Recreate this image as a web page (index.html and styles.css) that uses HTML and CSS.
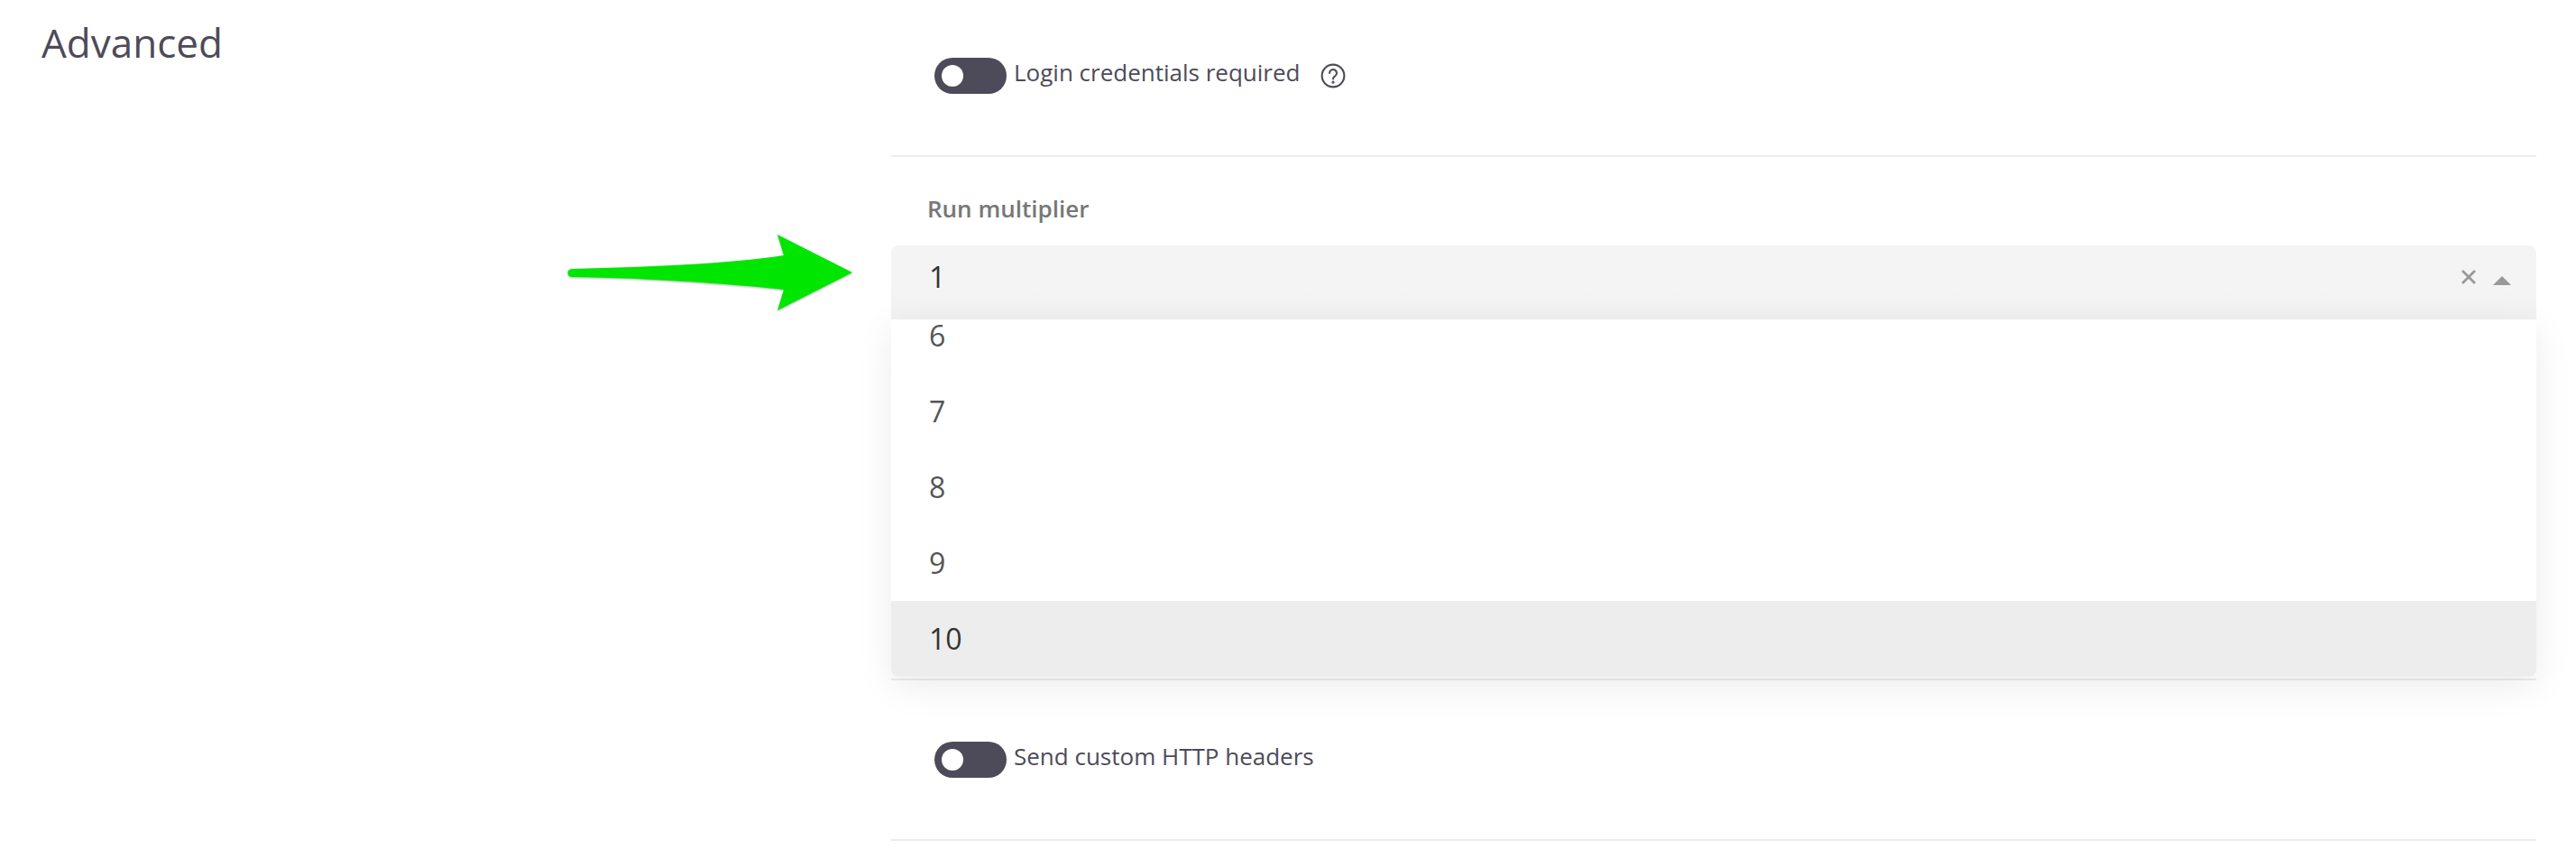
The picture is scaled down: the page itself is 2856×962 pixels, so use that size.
FILE: index.html
```html
<!DOCTYPE html>
<html lang="en">
<head>
    <meta charset="UTF-8">
    <title>Advanced settings</title>
    <link rel="stylesheet" href="styles.css">
</head>
<body>
    <div class="settings-page">
        <h2 class="side-title">Advanced</h2>

        <div class="settings-list">
            <div class="row row-login">
                <span class="toggle"><span class="knob"></span></span>
                <span class="toggle-label">Login credentials required</span>
                <svg class="help-icon" viewBox="0 0 24 24" width="28" height="28" fill="none" stroke="#4d4b59" stroke-width="1.8" stroke-linecap="round">
                    <circle cx="12" cy="12" r="10.6"/>
                    <path d="M8.6 9.4a3.4 3.4 0 1 1 5.2 2.9c-1.2.8-1.8 1.4-1.8 2.7"/>
                    <circle cx="12" cy="18.2" r="0.5" fill="#4d4b59"/>
                </svg>
            </div>

            <div class="row row-select">
                <label class="field-label">Run multiplier</label>
                <div class="select">
                    <div class="select-control">
                        <span class="select-value">1</span>
                        <svg class="clear-icon" viewBox="0 0 16 16" width="16" height="16" stroke="#999" stroke-width="2.8" fill="none">
                            <path d="M1 1l14 14M15 1l-14 14"/>
                        </svg>
                        <span class="caret"></span>
                    </div>
                    <div class="select-menu">
                        <div class="option">6</div>
                        <div class="option">7</div>
                        <div class="option">8</div>
                        <div class="option">9</div>
                        <div class="option selected">10</div>
                    </div>
                </div>
            </div>

            <div class="row row-headers">
                <span class="toggle"><span class="knob"></span></span>
                <span class="toggle-label">Send custom HTTP headers</span>
            </div>
        </div>
    </div>

    <!-- annotation arrow on top of the screenshot -->
    <svg class="arrow" width="340" height="110" viewBox="0 0 340 110">
        <path d="M12 43C100 41 190 37 247 28L240 5L323 47L240 89L247 66C190 60 100 53 12 52C6 52 6 43 12 43Z" fill="#00e600"/>
    </svg>
</body>
</html>
```

FILE: styles.css
```css
* {
    margin: 0;
    padding: 0;
    box-sizing: border-box;
}

body {
    background: #fff;
    font-family: "Open Sans", "Noto Sans", sans-serif;
    color: #4d4b59;
    height: 962px;
    overflow: hidden;
    position: relative;
}

.settings-page {
    display: grid;
    grid-template-columns: 988px 1824px;
}

.side-title {
    font-size: 44px;
    font-weight: 400;
    line-height: 60px;
    padding: 17px 0 0 46px;
}

.row {
    border-bottom: 2px solid #ececec;
}

.row-login {
    height: 174px;
    padding: 64px 0 0 48px;
    display: flex;
    align-items: flex-start;
}

.row-select {
    height: 580px;
    padding-top: 42px;
}

.row-headers {
    height: 178px;
    padding: 68px 0 0 48px;
    display: flex;
    align-items: flex-start;
}

.toggle {
    width: 80px;
    height: 40px;
    border-radius: 20px;
    background: #4d4b59;
    display: flex;
    align-items: center;
    padding-left: 8px;
    flex-shrink: 0;
}

.knob {
    width: 24px;
    height: 24px;
    border-radius: 50%;
    background: #fff;
}

.toggle-label {
    font-size: 26px;
    line-height: 32px;
    margin-left: 8px;
}

.help-icon {
    margin: 6px 0 0 23px;
}

.field-label {
    display: block;
    font-size: 26px;
    font-weight: 600;
    line-height: 30px;
    color: #777;
    padding-left: 40px;
    margin-bottom: 26px;
}

.select {
    position: relative;
}

.select-control {
    height: 82px;
    background: linear-gradient(#f4f4f4 60%, #f1f1f1);
    border-radius: 8px 8px 0 0;
    display: flex;
    align-items: center;
    padding: 0 28px 14px 42px;
}

.select-value {
    flex: 1;
    font-size: 32px;
    color: #333;
}

.clear-icon {
    margin: 2px 19px 0 0;
}

.caret {
    width: 0;
    height: 0;
    border-left: 10px solid transparent;
    border-right: 10px solid transparent;
    border-bottom: 10px solid #999;
    margin-top: 10px;
}

.select-menu {
    position: absolute;
    top: 82px;
    left: 0;
    right: 0;
    height: 396px;
    background: #fff;
    border-radius: 0 0 8px 8px;
    box-shadow: 0 10px 40px rgba(0, 0, 0, 0.08);
    overflow: hidden;
    display: flex;
    flex-direction: column;
    justify-content: flex-end;
}

.option {
    flex: 0 0 84px;
    display: flex;
    align-items: center;
    padding: 0 0 2px 42px;
    font-size: 32px;
    color: #555;
}

.option.selected {
    background: #ededed;
    color: #333;
}

.arrow {
    position: absolute;
    left: 622px;
    top: 255px;
    filter: drop-shadow(0 1px 1px rgba(0, 0, 0, 0.3));
}
```
